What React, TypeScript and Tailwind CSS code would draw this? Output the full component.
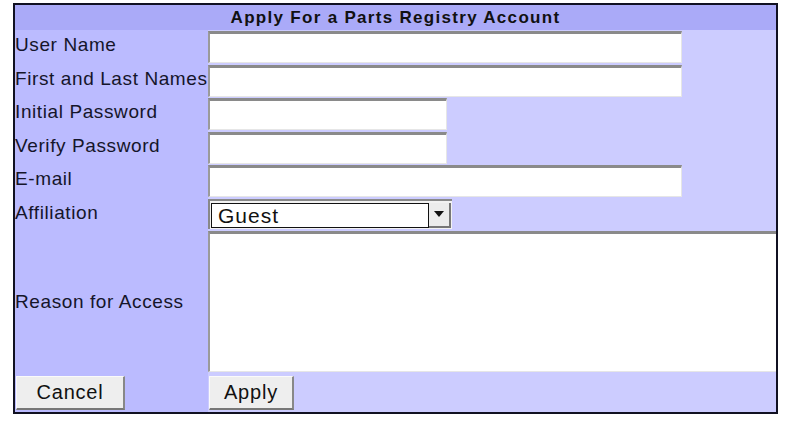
import React from "react";

const inputCls =
  "h-[32px] bg-white border-t-[3px] border-l-[2px] border-b border-r border-t-[#8a8a8a] border-l-[#9a9a9a] border-b-[#e6e6e6] border-r-[#e6e6e6] outline-none";

export default function App() {
  const font = { fontFamily: '"Liberation Sans", Arial, sans-serif' };
  return (
    <div className="w-[800px] h-[423px] bg-white pt-[3px] pl-[13px]" style={font}>
      <div className="w-[765px] border-[2px] border-[#111122] border-r-[2px] flex flex-col">
        <div className="h-[25px] bg-[#aaaaf8] text-center font-bold text-[17px] tracking-[1.3px] leading-[25px] text-[#111]">
          Apply For a Parts Registry Account
        </div>
        <div className="grid grid-cols-[193px_1fr] text-[19px] tracking-[0.6px] text-[#15152a]">
          {[
            ["User Name", "w-[474px]"],
            ["First and Last Names", "w-[474px]"],
            ["Initial Password", "w-[239px]"],
            ["Verify Password", "w-[239px]"],
            ["E-mail", "w-[474px]"],
          ].map(([label, w], i) => (
            <React.Fragment key={i}>
              <div className="bg-[#bbbbff] h-[33.5px] flex items-center whitespace-nowrap pb-[3px]">
                {label}
              </div>
              <div className="bg-[#ccccff] h-[33.5px] flex items-start pt-[1px]">
                <input className={`${inputCls} ${w}`} />
              </div>
            </React.Fragment>
          ))}
          <div className="bg-[#bbbbff] h-[33.5px] flex items-center pb-[3px]">Affiliation</div>
          <div className="bg-[#ccccff] h-[33.5px] flex items-center">
            <div className="w-[244px] h-[30px] bg-[#f2f2f2] border-t-[2px] border-l-[2px] border-t-[#888] border-l-[#888] flex items-center p-[1px]">
              <div className="flex-1 h-[25px] bg-white border border-[#111] flex items-center pl-[6px] text-[21px] tracking-[1px] text-[#111]">
                Guest
              </div>
              <div className="w-[22px] h-[25px] bg-[#ececec] border-r-[2px] border-b-[2px] border-r-[#777] border-b-[#777] flex items-center justify-center">
                <svg width="10" height="6" viewBox="0 0 10 6">
                  <path d="M0 0h10L5 6z" fill="#111" />
                </svg>
              </div>
            </div>
          </div>
          <div className="bg-[#bbbbff] h-[142px] flex items-center">Reason for Access</div>
          <div className="bg-[#ccccff] h-[142px]">
            <textarea className="w-full h-[141px] bg-white border-t-[3px] border-l-[2px] border-t-[#8a8a8a] border-l-[#9a9a9a] border-b border-b-[#e6e6e6] outline-none resize-none" />
          </div>
          <div className="bg-[#bbbbff] h-[39px] flex items-center">
            <button className="ml-[1px] w-[109px] h-[34px] bg-[#eeeeee] border-r-[2px] border-b-[2px] border-r-[#888] border-b-[#777] border-t border-l border-t-[#fafafa] border-l-[#fafafa] text-[20px] tracking-[0.8px] text-[#111] leading-none">
              Cancel
            </button>
          </div>
          <div className="bg-[#ccccff] h-[39px] flex items-center">
            <button className="ml-[1px] w-[85px] h-[34px] bg-[#eeeeee] border-r-[2px] border-b-[2px] border-r-[#888] border-b-[#777] border-t border-l border-t-[#fafafa] border-l-[#fafafa] text-[20px] tracking-[0.8px] text-[#111] leading-none">
              Apply
            </button>
          </div>
        </div>
      </div>
    </div>
  );
}
